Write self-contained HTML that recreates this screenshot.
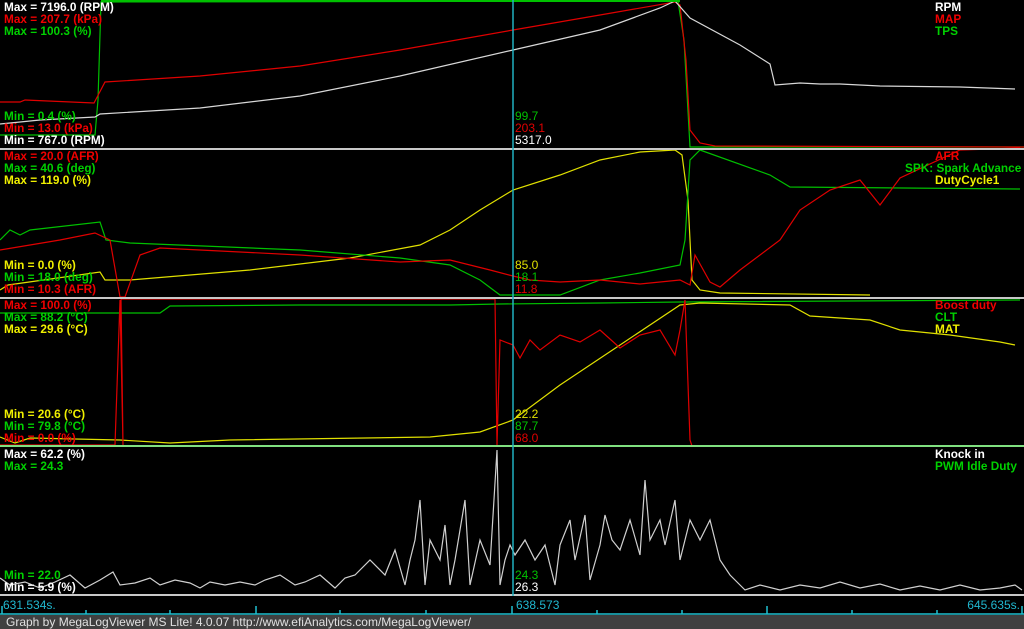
<!DOCTYPE html>
<html><head><meta charset="utf-8"><style>
html,body{margin:0;padding:0;background:#000;width:1024px;height:629px;overflow:hidden}
svg{display:block}
text{font-family:"Liberation Sans",Arial,sans-serif;font-size:11.8px;font-weight:bold}
.v{font-weight:normal;font-size:12px}
</style></head><body>
<svg width="1024" height="629" viewBox="0 0 1024 629" xmlns="http://www.w3.org/2000/svg">
<rect width="1024" height="629" fill="#000"/>
<g fill="none" stroke-width="1.2">
<polyline stroke="#00c000" points="0,135 95,135 98,100 101,2 678,1 684,40 690,147 1024,147"/>
<polyline stroke="#e00000" points="0,102 20,102 25,100 94,103 105,82 200,76 300,66 400,50 513,30 600,15 675,2 680,5 686,60 690,130 700,143 715,146 1024,147"/>
<polyline stroke="#d8d8d8" points="0,124 40,120 95,117 100,114 200,108 300,96 400,76 513,50 600,30 660,8 675,1 690,18 740,45 770,64 775,85 800,83 820,84 840,84 880,86 960,87 1015,89"/>
<polyline stroke="#e0e000" points="0,290 8,285 100,272 105,280 130,280 250,270 350,258 420,245 450,230 480,210 513,190 560,175 600,160 640,152 675,150 682,155 688,200 692,280 700,290 720,293 870,295"/>
<polyline stroke="#00c000" points="0,240 10,230 20,235 30,230 100,222 106,240 130,243 300,250 400,258 450,265 480,280 500,295 560,295 600,280 640,273 680,265 685,240 690,160 700,150 770,175 790,187 1020,189"/>
<polyline stroke="#e00000" points="0,250 60,240 95,233 110,240 120,297 125,297 140,255 160,248 200,250 300,255 400,262 450,260 490,270 513,276 530,280 560,282 600,280 640,284 680,280 690,285 695,255 710,282 720,287 740,270 780,240 800,210 830,190 860,180 880,205 900,178 960,150 1020,148"/>
<polyline stroke="#00c000" points="0,313 160,313 170,306 300,305 450,305 500,304 600,303 680,302 1020,300"/>
<polyline stroke="#e0e000" points="0,437 15,443 30,438 120,440 170,443 230,440 430,437 480,432 513,420 560,385 620,345 680,305 700,303 790,305 810,316 870,320 900,330 950,335 1000,342 1015,345"/>
<polyline stroke="#e00000" points="0,445 115,445 120,300 123,445 121,299 495,299 497,445 500,340 513,345 520,358 530,340 540,350 560,335 580,342 600,330 620,348 640,335 660,330 675,355 680,330 685,300 690,440 692,446"/>
<polyline stroke="#d0d0d0" points="0,578 10,585 25,582 40,588 55,582 70,575 85,588 100,580 113,572 120,585 135,583 150,578 160,585 175,580 190,583 200,588 210,582 225,585 240,582 255,585 265,580 280,575 295,585 305,582 320,575 335,588 345,578 355,575 370,560 385,575 395,550 405,585 410,560 415,540 420,500 425,585 430,540 440,560 445,525 450,585 455,560 465,500 470,585 480,540 490,565 497,450 500,585 505,560 510,545 515,555 525,540 535,560 545,545 555,585 560,545 570,520 575,560 585,515 590,580 600,545 605,515 612,540 620,550 630,520 640,555 645,480 650,540 660,520 665,545 675,500 680,560 690,520 700,540 710,520 720,560 730,575 745,590 760,585 780,590 800,585 820,588 840,582 860,588 880,584 900,590 920,586 940,590 960,585 980,590 1000,588 1015,585 1022,590"/>
</g>
<g stroke="#c8c8c8" stroke-width="2">
<line x1="0" y1="149" x2="1024" y2="149"/>
<line x1="0" y1="298" x2="1024" y2="298"/>
<line x1="0" y1="595" x2="1024" y2="595"/>
</g>
<line x1="0" y1="446" x2="1024" y2="446" stroke="#80e080" stroke-width="2"/>
<line x1="101" y1="1" x2="680" y2="1" stroke="#00c000" stroke-width="2"/>
<line x1="513" y1="0" x2="513" y2="596" stroke="#20b0c0" stroke-width="1.5"/>
<text x="4" y="11" fill="#fff">Max = 7196.0 (RPM)</text>
<text x="4" y="23" fill="#f00000">Max = 207.7 (kPa)</text>
<text x="4" y="35" fill="#00d000">Max = 100.3 (%)</text>
<text x="4" y="120" fill="#00d000">Min = 0.4 (%)</text>
<text x="4" y="132" fill="#f00000">Min = 13.0 (kPa)</text>
<text x="4" y="144" fill="#fff">Min = 767.0 (RPM)</text>
<text class="v" x="515" y="120" fill="#00c000">99.7</text>
<text class="v" x="515" y="132" fill="#e00000">203.1</text>
<text class="v" x="515" y="144" fill="#fff">5317.0</text>
<text x="935" y="11" fill="#fff">RPM</text>
<text x="935" y="23" fill="#f00000">MAP</text>
<text x="935" y="35" fill="#00d000">TPS</text>
<text x="4" y="160" fill="#f00000">Max = 20.0 (AFR)</text>
<text x="4" y="172" fill="#00d000">Max = 40.6 (deg)</text>
<text x="4" y="184" fill="#f0f000">Max = 119.0 (%)</text>
<text x="4" y="269" fill="#f0f000">Min = 0.0 (%)</text>
<text x="4" y="281" fill="#00d000">Min = 18.0 (deg)</text>
<text x="4" y="293" fill="#f00000">Min = 10.3 (AFR)</text>
<text class="v" x="515" y="269" fill="#e0e000">85.0</text>
<text class="v" x="515" y="281" fill="#00c000">18.1</text>
<text class="v" x="515" y="293" fill="#e00000">11.8</text>
<text x="935" y="160" fill="#f00000">AFR</text>
<text x="905" y="172" fill="#00d000">SPK: Spark Advance</text>
<text x="935" y="184" fill="#f0f000">DutyCycle1</text>
<text x="4" y="309" fill="#f00000">Max = 100.0 (%)</text>
<text x="4" y="321" fill="#00d000">Max = 88.2 (°C)</text>
<text x="4" y="333" fill="#f0f000">Max = 29.6 (°C)</text>
<text x="4" y="418" fill="#f0f000">Min = 20.6 (°C)</text>
<text x="4" y="430" fill="#00d000">Min = 79.8 (°C)</text>
<text x="4" y="442" fill="#f00000">Min = 0.0 (%)</text>
<text class="v" x="515" y="418" fill="#e0e000">22.2</text>
<text class="v" x="515" y="430" fill="#00c000">87.7</text>
<text class="v" x="515" y="442" fill="#e00000">68.0</text>
<text x="935" y="309" fill="#f00000">Boost duty</text>
<text x="935" y="321" fill="#00d000">CLT</text>
<text x="935" y="333" fill="#f0f000">MAT</text>
<text x="4" y="458" fill="#fff">Max = 62.2 (%)</text>
<text x="4" y="470" fill="#00d000">Max = 24.3</text>
<text x="4" y="579" fill="#00d000">Min = 22.0</text>
<text x="4" y="591" fill="#fff">Min = 5.9 (%)</text>
<text class="v" x="515" y="579" fill="#00c000">24.3</text>
<text class="v" x="515" y="591" fill="#fff">26.3</text>
<text x="935" y="458" fill="#fff">Knock in</text>
<text x="935" y="470" fill="#00d000">PWM Idle Duty</text>
<text class="v" x="3" y="609" fill="#20b8d0">631.534s.</text>
<text class="v" x="516" y="609" fill="#20b8d0">638.573</text>
<text class="v" x="1020" y="609" fill="#20b8d0" text-anchor="end">645.635s.</text>
<g stroke="#20c0d0" stroke-width="1.5">
<line x1="0" y1="614" x2="1024" y2="614"/>
<line x1="2" y1="606" x2="2" y2="614"/>
<line x1="86" y1="610" x2="86" y2="614"/>
<line x1="170" y1="610" x2="170" y2="614"/>
<line x1="256" y1="606" x2="256" y2="614"/>
<line x1="340" y1="610" x2="340" y2="614"/>
<line x1="426" y1="610" x2="426" y2="614"/>
<line x1="512" y1="606" x2="512" y2="614"/>
<line x1="597" y1="610" x2="597" y2="614"/>
<line x1="682" y1="610" x2="682" y2="614"/>
<line x1="767" y1="606" x2="767" y2="614"/>
<line x1="852" y1="610" x2="852" y2="614"/>
<line x1="937" y1="610" x2="937" y2="614"/>
<line x1="1022" y1="606" x2="1022" y2="614"/>
</g>
<rect x="0" y="615" width="1024" height="14" fill="#404040"/>
<text x="6" y="626" fill="#e0e0e0" style="font-weight:normal;font-size:12px">Graph by MegaLogViewer MS Lite! 4.0.07 http://www.efiAnalytics.com/MegaLogViewer/</text>
</svg>
</body></html>
